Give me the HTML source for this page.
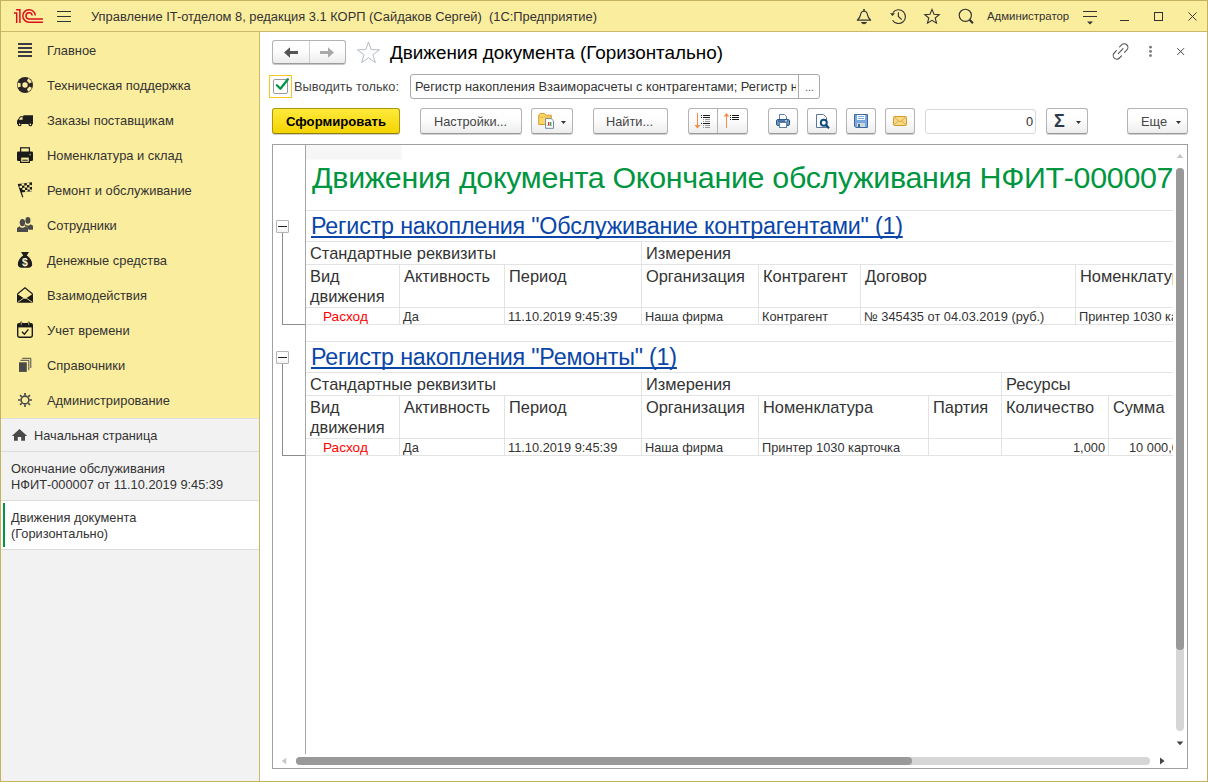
<!DOCTYPE html>
<html lang="ru"><head><meta charset="utf-8"><title>Движения документа (Горизонтально)</title>
<style>
*{box-sizing:border-box;margin:0;padding:0}
html,body{width:1208px;height:782px;overflow:hidden;background:#fff}
body{font-family:"Liberation Sans",sans-serif;font-size:13px;color:#333;position:relative}
.a{position:absolute}
.t{position:absolute;white-space:nowrap;line-height:1}
.btn{position:absolute;top:108px;height:26px;border:1px solid #b4b4b4;border-bottom-color:#9a9a9a;border-radius:3px;background:linear-gradient(#ffffff 0%,#fdfdfd 45%,#ededed 100%);box-shadow:0 1px 0 rgba(0,0,0,.18)}
.hl{position:absolute;left:306px;width:867px;height:1px;background:#e3e3e3}
.vl{position:absolute;width:1px;background:#e3e3e3}
.lnk{text-decoration:underline;text-decoration-thickness:2px;text-underline-offset:2px;text-decoration-skip-ink:none}
.gbox{position:absolute;left:276px;width:13px;height:13px;border:1px solid #b4b4b4;border-radius:1px;background:linear-gradient(#fff 50%,#f2f2f2)}
.gbox:after{content:"";position:absolute;left:1px;top:5px;width:9px;height:1px;background:#222}
svg{position:absolute;left:0;top:0;overflow:visible}
</style></head><body>
<div class="a" style="left:0;top:0;width:1208px;height:32px;background:#fbed9e;border-bottom:1px solid #cbb967"></div>
<div class="a" style="left:0;top:32px;width:260px;height:386px;background:#fbed9e"></div>
<div class="a" style="left:0;top:418px;width:260px;height:364px;background:#f2f2f2;border-top:1px solid #dedede"></div>
<div class="a" style="left:0;top:451px;width:260px;height:1px;background:#dcdcdc"></div>
<div class="a" style="left:0;top:500px;width:260px;height:50px;background:#fff;border-top:1px solid #dcdcdc;border-bottom:1px solid #dcdcdc"></div>
<div class="a" style="left:3px;top:503px;width:2px;height:44px;background:#009646"></div>
<div class="a" style="left:259px;top:32px;width:1px;height:750px;background:#cbb967"></div>
<div class="a" style="left:0;top:0;width:1208px;height:782px;border:1px solid #c5b25e;pointer-events:none"></div>
<div class="a" style="left:272px;top:40px;width:74px;height:24px;border:1px solid #b3b3b3;border-bottom-color:#9c9c9c;border-radius:3px;background:linear-gradient(#fff 0%,#fdfdfd 45%,#ececec 100%);box-shadow:0 1px 0 rgba(0,0,0,.22)"></div>
<div class="a" style="left:309px;top:41px;width:1px;height:22px;background:#cfcfcf"></div>
<div class="a" style="left:269px;top:75px;width:23px;height:23px;border:1px solid #fbc620"></div>
<div class="a" style="left:273px;top:79px;width:15px;height:15px;border:1px solid #9a9a9a;background:#fff;border-radius:2px"></div>
<div class="a" style="left:410px;top:74px;width:410px;height:25px;border:1px solid #a8a8a8;border-radius:3px;background:#fff"></div>
<div class="a" style="left:798px;top:75px;width:1px;height:23px;background:#a8a8a8"></div>
<div class="btn" style="left:272px;width:128px;background:linear-gradient(#ffea3c,#f3d400);border-color:#a8960f;border-bottom-color:#8f7f10"></div>
<div class="btn" style="left:420px;width:102px"></div>
<div class="btn" style="left:531px;width:42px"></div>
<div class="btn" style="left:593px;width:75px"></div>
<div class="btn" style="left:688px;width:60px"></div>
<div class="a" style="left:717px;top:109px;width:1px;height:24px;background:#b4b4b4"></div>
<div class="btn" style="left:768px;width:30px"></div>
<div class="btn" style="left:807px;width:30px"></div>
<div class="btn" style="left:846px;width:30px"></div>
<div class="btn" style="left:885px;width:30px"></div>
<div class="a" style="left:925px;top:109px;width:111px;height:25px;border:1px solid #d8d8d8;border-radius:3px;background:#fff"></div>
<div class="btn" style="left:1046px;width:42px"></div>
<div class="btn" style="left:1127px;width:61px"></div>
<div class="t" style="left:91px;top:11px;font-size:12.88px;color:#333;">Управление IT-отделом 8, редакция 3.1 КОРП (Сайдаков Сергей)&nbsp; (1С:Предприятие)</div>
<div class="t" style="left:987px;top:11px;font-size:11.4px;color:#333;">Администратор</div>
<div class="t" style="left:47px;top:45px;font-size:12.9px;color:#333;">Главное</div>
<div class="t" style="left:47px;top:80px;font-size:12.9px;color:#333;">Техническая поддержка</div>
<div class="t" style="left:47px;top:115px;font-size:12.9px;color:#333;">Заказы поставщикам</div>
<div class="t" style="left:47px;top:150px;font-size:12.9px;color:#333;">Номенклатура и склад</div>
<div class="t" style="left:47px;top:185px;font-size:12.9px;color:#333;">Ремонт и обслуживание</div>
<div class="t" style="left:47px;top:220px;font-size:12.9px;color:#333;">Сотрудники</div>
<div class="t" style="left:47px;top:255px;font-size:12.9px;color:#333;">Денежные средства</div>
<div class="t" style="left:47px;top:290px;font-size:12.9px;color:#333;">Взаимодействия</div>
<div class="t" style="left:47px;top:325px;font-size:12.9px;color:#333;">Учет времени</div>
<div class="t" style="left:47px;top:360px;font-size:12.9px;color:#333;">Справочники</div>
<div class="t" style="left:47px;top:395px;font-size:12.9px;color:#333;">Администрирование</div>
<div class="t" style="left:34px;top:430px;font-size:12.75px;color:#333;">Начальная страница</div>
<div class="t" style="left:11px;top:463px;font-size:12.8px;color:#333;">Окончание обслуживания</div>
<div class="t" style="left:11px;top:479px;font-size:12.8px;color:#333;">НФИТ-000007 от 11.10.2019 9:45:39</div>
<div class="t" style="left:11px;top:512px;font-size:12.8px;color:#333;">Движения документа</div>
<div class="t" style="left:11px;top:528px;font-size:12.8px;color:#333;">(Горизонтально)</div>
<div class="t" style="left:390px;top:44px;font-size:18.86px;color:#000;">Движения документа (Горизонтально)</div>
<div class="t" style="left:294px;top:81px;font-size:12.8px;color:#444;">Выводить только:</div>
<div class="t" style="left:415px;top:81px;font-size:12.85px;color:#333;width:381px;overflow:hidden;height:16px">Регистр накопления Взаиморасчеты с контрагентами; Регистр накопления</div>
<div class="t" style="left:805px;top:82px;font-size:11px;color:#555;">...</div>
<div class="t" style="left:286px;top:115px;font-size:13.13px;color:#000;font-weight:bold;">Сформировать</div>
<div class="t" style="left:434px;top:116px;font-size:12.75px;color:#444;">Настройки...</div>
<div class="t" style="left:606px;top:116px;font-size:12.75px;color:#444;">Найти...</div>
<div class="t" style="left:1026px;top:116px;font-size:12.8px;color:#333;">0</div>
<div class="t" style="left:1054px;top:112px;font-size:18px;color:#2b3a4a;font-weight:bold;">Σ</div>
<div class="t" style="left:1141px;top:116px;font-size:12.8px;color:#444;">Еще</div>
<div class="a" style="left:272px;top:144px;width:916px;height:625px;border:1px solid #a0a0a0;background:#fff"></div>
<div class="a" style="left:305px;top:145px;width:1px;height:609px;background:#a6a6a6"></div>
<div class="a" style="left:306px;top:145px;width:96px;height:15px;background:#f6f6f6;border-right:1px solid #fafafa;border-bottom:1px solid #fafafa"></div>
<div class="a" style="left:306px;top:145px;width:867px;height:610px;overflow:hidden"><div class="a" style="left:-306px;top:-145px;width:1208px;height:782px">
<div class="hl" style="top:210px"></div>
<div class="hl" style="top:241px"></div>
<div class="hl" style="top:264px"></div>
<div class="hl" style="top:307px"></div>
<div class="hl" style="top:324px"></div>
<div class="hl" style="top:341px"></div>
<div class="hl" style="top:372px"></div>
<div class="hl" style="top:395px"></div>
<div class="hl" style="top:438px"></div>
<div class="hl" style="top:455px"></div>
<div class="vl" style="left:399px;top:265px;height:59px"></div>
<div class="vl" style="left:504px;top:265px;height:59px"></div>
<div class="vl" style="left:758px;top:265px;height:59px"></div>
<div class="vl" style="left:860px;top:265px;height:59px"></div>
<div class="vl" style="left:1075px;top:265px;height:59px"></div>
<div class="vl" style="left:641px;top:242px;height:82px"></div>
<div class="vl" style="left:399px;top:396px;height:59px"></div>
<div class="vl" style="left:504px;top:396px;height:59px"></div>
<div class="vl" style="left:758px;top:396px;height:59px"></div>
<div class="vl" style="left:928px;top:396px;height:59px"></div>
<div class="vl" style="left:1108px;top:396px;height:59px"></div>
<div class="vl" style="left:641px;top:373px;height:82px"></div>
<div class="vl" style="left:1001px;top:373px;height:82px"></div>
<div class="t" style="left:312px;top:162px;font-size:30.4px;color:#00963f;letter-spacing:-0.3px">Движения документа Окончание обслуживания НФИТ-000007</div>
<div class="t lnk" style="left:311px;top:215px;font-size:23.3px;color:#0a46a8;letter-spacing:-0.2px">Регистр накопления "Обслуживание контрагентами" (1)</div>
<div class="t" style="left:310px;top:245px;font-size:16.4px;color:#333;">Стандартные реквизиты</div>
<div class="t" style="left:646px;top:245px;font-size:16.4px;color:#333;">Измерения</div>
<div class="t" style="left:310px;top:268px;font-size:16.4px;color:#333;">Вид</div>
<div class="t" style="left:310px;top:288px;font-size:16.4px;color:#333;">движения</div>
<div class="t" style="left:404px;top:268px;font-size:16.4px;color:#333;">Активность</div>
<div class="t" style="left:509px;top:268px;font-size:16.4px;color:#333;">Период</div>
<div class="t" style="left:646px;top:268px;font-size:16.4px;color:#333;">Организация</div>
<div class="t" style="left:323px;top:310px;font-size:13.6px;color:#ff0000;">Расход</div>
<div class="t" style="left:403px;top:311px;font-size:12.8px;color:#333;">Да</div>
<div class="t" style="left:508px;top:311px;font-size:12.8px;color:#333;">11.10.2019 9:45:39</div>
<div class="t" style="left:645px;top:311px;font-size:12.8px;color:#333;">Наша фирма</div>
<div class="t" style="left:763px;top:268px;font-size:16.4px;color:#333;">Контрагент</div>
<div class="t" style="left:865px;top:268px;font-size:16.4px;color:#333;">Договор</div>
<div class="t" style="left:1080px;top:268px;font-size:16.4px;color:#333;">Номенклатура</div>
<div class="t" style="left:762px;top:311px;font-size:12.8px;color:#333;">Контрагент</div>
<div class="t" style="left:864px;top:311px;font-size:12.8px;color:#333;">№ 345435 от 04.03.2019 (руб.)</div>
<div class="t" style="left:1079px;top:311px;font-size:12.8px;color:#333;">Принтер 1030 карточка</div>
<div class="t lnk" style="left:311px;top:346px;font-size:23.3px;color:#0a46a8;letter-spacing:-0.2px">Регистр накопления "Ремонты" (1)</div>
<div class="t" style="left:310px;top:376px;font-size:16.4px;color:#333;">Стандартные реквизиты</div>
<div class="t" style="left:646px;top:376px;font-size:16.4px;color:#333;">Измерения</div>
<div class="t" style="left:310px;top:399px;font-size:16.4px;color:#333;">Вид</div>
<div class="t" style="left:310px;top:419px;font-size:16.4px;color:#333;">движения</div>
<div class="t" style="left:404px;top:399px;font-size:16.4px;color:#333;">Активность</div>
<div class="t" style="left:509px;top:399px;font-size:16.4px;color:#333;">Период</div>
<div class="t" style="left:646px;top:399px;font-size:16.4px;color:#333;">Организация</div>
<div class="t" style="left:323px;top:441px;font-size:13.6px;color:#ff0000;">Расход</div>
<div class="t" style="left:403px;top:442px;font-size:12.8px;color:#333;">Да</div>
<div class="t" style="left:508px;top:442px;font-size:12.8px;color:#333;">11.10.2019 9:45:39</div>
<div class="t" style="left:645px;top:442px;font-size:12.8px;color:#333;">Наша фирма</div>
<div class="t" style="left:1006px;top:376px;font-size:16.4px;color:#333;">Ресурсы</div>
<div class="t" style="left:763px;top:399px;font-size:16.4px;color:#333;">Номенклатура</div>
<div class="t" style="left:933px;top:399px;font-size:16.4px;color:#333;">Партия</div>
<div class="t" style="left:1006px;top:399px;font-size:16.4px;color:#333;">Количество</div>
<div class="t" style="left:1113px;top:399px;font-size:16.4px;color:#333;">Сумма</div>
<div class="t" style="left:762px;top:442px;font-size:12.8px;color:#333;">Принтер 1030 карточка</div>
<div class="t" style="left:1005px;top:442px;font-size:12.8px;color:#333;width:100px;text-align:right">1,000</div>
<div class="t" style="left:1129px;top:442px;font-size:12.8px;color:#333;">10 000,00</div>
</div></div>
<div class="gbox" style="top:220px"></div>
<div class="a" style="left:282px;top:233px;width:1px;height:91px;background:#8c8c8c"></div>
<div class="a" style="left:282px;top:324px;width:23px;height:1px;background:#8c8c8c"></div>
<div class="gbox" style="top:351px"></div>
<div class="a" style="left:282px;top:364px;width:1px;height:91px;background:#8c8c8c"></div>
<div class="a" style="left:282px;top:455px;width:23px;height:1px;background:#8c8c8c"></div>
<div class="a" style="left:1176px;top:168px;width:8px;height:563px;border-radius:4px;background:#d6d6d6"></div>
<div class="a" style="left:1176px;top:168px;width:8px;height:482px;border-radius:4px;background:#999"></div>
<div class="a" style="left:296px;top:757px;width:854px;height:8px;border-radius:4px;background:#d6d6d6"></div>
<div class="a" style="left:296px;top:757px;width:616px;height:8px;border-radius:4px;background:#999"></div>
<svg width="1208" height="782" viewBox="0 0 1208 782" style="pointer-events:none">
<!-- 1C logo -->
<g fill="none" stroke="#d8101c" stroke-width="1.5">
 <path d="M14 12.9H16.7V22.9"/>
 <path d="M16.1 9.75H19.9V22.9"/>
 <path d="M35.35 15.5A6.27 6.27 0 1 0 29.1 22.17H42.9"/>
 <path d="M32.2 15.5A3.13 3.13 0 1 0 29.1 19.03H42.9"/>
</g>
<!-- title hamburger -->
<g fill="#333"><rect x="57" y="11" width="14" height="1"/><rect x="57" y="16" width="14" height="1"/><rect x="57" y="21" width="14" height="1"/></g>
<!-- bell -->
<g fill="none" stroke="#333" stroke-width="1.15" stroke-linejoin="round">
 <path d="M857.3 20.1H870.7C868.6 18 867.6 16.6 867.4 14.6C867.2 12.4 866.3 11.2 864 11.2C861.7 11.2 860.8 12.4 860.6 14.6C860.4 16.6 859.4 18 857.3 20.1Z"/>
</g>
<circle cx="864" cy="10" r="1.05" fill="#333"/>
<path d="M860.9 22.1H867.1C866.4 23.5 865.3 24.2 864 24.2C862.7 24.2 861.6 23.5 860.9 22.1Z" fill="#333"/>
<!-- history -->
<g fill="none" stroke="#333" stroke-width="1.15">
 <path d="M892.9 12.6A6.9 6.9 0 1 1 892.6 20.2"/>
 <path d="M898.4 12.2V16.5L901.7 19.7"/>
</g>
<path d="M890 13.2H895L892.5 16Z" fill="#333"/>
<!-- star -->
<path d="M932 9.4L934 14.2L939.2 14.6L935.2 18L936.5 23.1L932 20.3L927.5 23.1L928.8 18L924.8 14.6L930 14.2Z" fill="none" stroke="#333" stroke-width="1.1" stroke-linejoin="miter"/>
<!-- search -->
<circle cx="965.3" cy="15.3" r="6.1" fill="none" stroke="#333" stroke-width="1.15"/>
<path d="M969.6 19.7L972.9 23.3" stroke="#333" stroke-width="2" fill="none"/>
<!-- settings lines -->
<g fill="#333"><rect x="1083" y="11" width="14" height="1"/><rect x="1083" y="16" width="14" height="1"/><path d="M1087 21.5H1093L1090 24.5Z"/></g>
<!-- min/max/close -->
<rect x="1120" y="20" width="9" height="1" fill="#333"/>
<rect x="1154.5" y="12.5" width="8" height="8" fill="none" stroke="#333" stroke-width="1"/>
<path d="M1188.5 12.5L1196.5 20.5M1196.5 12.5L1188.5 20.5" stroke="#333" stroke-width="0.95" fill="none"/>

<!-- sidebar icons -->
<g fill="#3b3b45"><rect x="18" y="43" width="14" height="2"/><rect x="18" y="47" width="14" height="2"/><rect x="18" y="51" width="14" height="2"/><rect x="18" y="55" width="14" height="2"/></g>
<!-- lifebuoy -->
<g>
 <circle cx="25" cy="85" r="8" fill="#2a2426"/>
 <circle cx="25" cy="85" r="2.7" fill="#fbed9e"/>
 <g stroke="#fbed9e" stroke-width="3" fill="none">
  <path d="M27.6 79.7A5.9 5.9 0 0 1 30.5 82.9" />
  <path d="M30.5 87.1A5.9 5.9 0 0 1 27.6 90.3" />
  <path d="M19.4 87A5.9 5.9 0 0 1 19.4 83" />
 </g>
</g>
<!-- truck -->
<g fill="#1d1d1d">
 <path d="M23.4 115.2H33V124H17V120.8L20.2 116.3H23.4Z"/>
 <circle cx="19.6" cy="124.4" r="1.9"/><circle cx="30.4" cy="124.4" r="1.9"/>
</g>
<path d="M20.6 117.3H22.6V119.8H18.8Z" fill="#fbed9e"/>
<circle cx="19.6" cy="124.4" r="0.8" fill="#fbed9e"/><circle cx="30.4" cy="124.4" r="0.8" fill="#fbed9e"/>
<!-- printer -->
<g>
 <rect x="20.6" y="147.8" width="8.8" height="5" fill="#fbed9e" stroke="#1a1a1a" stroke-width="1.2"/>
 <rect x="17" y="151.6" width="16" height="9.4" rx="1.2" fill="#1a1a1a"/>
 <rect x="20.6" y="157" width="8.8" height="5.4" fill="#fbed9e" stroke="#1a1a1a" stroke-width="1.2"/>
 <rect x="22.3" y="159.7" width="5.4" height="1" fill="#1a1a1a"/>
 <rect x="29.4" y="153.8" width="1.6" height="1.6" fill="#8a8370"/>
</g>
<!-- flag -->
<g>
 <path d="M18.3 184L32 182.3V191.2L20.8 192.6Z" fill="#1a1a1a"/>
 <path d="M18.3 184L22.8 197.2" stroke="#1a1a1a" stroke-width="1.2" fill="none"/>
 <g fill="#fbed9e">
  <rect x="21.6" y="183.4" width="2.6" height="2.2"/><rect x="26.8" y="182.8" width="2.6" height="2.2"/>
  <rect x="19.6" y="185.8" width="2.4" height="2.2"/><rect x="24.4" y="185.4" width="2.6" height="2.2"/><rect x="29.4" y="184.9" width="2.4" height="2.2"/>
  <rect x="22.4" y="187.9" width="2.6" height="2.2"/><rect x="27.2" y="187.4" width="2.6" height="2.2"/>
  <rect x="25" y="190" width="2.6" height="1.8"/><rect x="29.8" y="189.5" width="2" height="1.6"/>
 </g>
</g>
<!-- people -->
<g fill="#4a4a4a">
 <ellipse cx="27.9" cy="220.4" rx="2.5" ry="3.3"/>
 <path d="M25.2 224.2C26.5 226 29.3 226 30.5 224.2L33 225.8V229.8H28.6L27.2 227.2L24.6 225.6Z"/>
 <ellipse cx="22.4" cy="222.6" rx="2.7" ry="3.6"/>
 <path d="M19.6 226.2C21 228.3 23.8 228.3 25.2 226.2L28 228V232H17V228Z"/>
</g>
<!-- money bag -->
<g>
 <path d="M21 252H29L26.8 255.6C30.2 257.6 32.2 261.3 32.2 264.3C32.2 266.6 30.6 267.8 28.6 267.8H21.4C19.4 267.8 17.8 266.6 17.8 264.3C17.8 261.3 19.8 257.6 23.2 255.6Z" fill="#1e1e1e"/>
 <text x="25" y="266.2" font-family="Liberation Sans, sans-serif" font-size="10.5" font-weight="bold" fill="#fdf6d0" text-anchor="middle">$</text>
</g>
<!-- open envelope -->
<g>
 <path d="M17.4 294L25 287.8L32.6 294" fill="none" stroke="#1a1a1a" stroke-width="1.2" stroke-linejoin="miter"/>
 <path d="M17 293.8L25 299L33 293.8V302.8H17Z" fill="#1a1a1a"/>
 <path d="M17.6 302.4L25 297.2L32.4 302.4" fill="none" stroke="#fbed9e" stroke-width="0.9"/>
</g>
<!-- calendar -->
<g>
 <rect x="17.7" y="323.6" width="14.6" height="13.6" rx="1.6" fill="none" stroke="#1a1a1a" stroke-width="1.4"/>
 <rect x="17.7" y="323.6" width="14.6" height="3.8" fill="#1a1a1a"/>
 <rect x="20.5" y="321.8" width="1.4" height="3.4" rx="0.7" fill="#fbed9e" stroke="#1a1a1a" stroke-width="0.7"/>
 <rect x="28.1" y="321.8" width="1.4" height="3.4" rx="0.7" fill="#fbed9e" stroke="#1a1a1a" stroke-width="0.7"/>
 <path d="M22 331.8L24.4 334.2L28.4 329.4" fill="none" stroke="#1a1a1a" stroke-width="1.4"/>
</g>
<!-- docs -->
<g fill="none" stroke="#4a4a4a" stroke-width="1">
 <rect x="19" y="362.3" width="7.8" height="9.6" fill="#4a4a4a" stroke="none"/>
 <path d="M20.4 360.3H28.8V370.2"/>
 <path d="M22.2 358.3H30.8V368"/>
</g>
<!-- gear -->
<g stroke="#4a4a4a" fill="none">
 <circle cx="25" cy="400" r="3.9" stroke-width="1.6"/>
 <g stroke-width="1.7">
  <path d="M25 393V395.4M25 404.6V407M18 400H20.4M29.6 400H32M20.05 395.05L21.75 396.75M28.25 403.25L29.95 404.95M29.95 395.05L28.25 396.75M21.75 403.25L20.05 404.95"/>
 </g>
</g>
<!-- home -->
<path d="M19.5 429L27.2 436H25V440.8H21.2V437H17.8V440.8H14V436H11.8Z" fill="#4a4a4a"/>

<!-- nav arrows -->
<path d="M284 52.5L290 47.2V51.1H298V53.9H290V57.8Z" fill="#555"/>
<path d="M334 52.5L328 47.2V51.1H320V53.9H328V57.8Z" fill="#a9a9a9"/>
<!-- fav star -->
<path d="M368.5 42L371.2 49.6L379.6 49.8L372.9 54.8L375.4 62.6L368.5 57.9L361.6 62.6L364.1 54.8L357.4 49.8L365.8 49.6Z" fill="#fff" stroke="#b4bcc6" stroke-width="1"/>
<!-- link -->
<g fill="none" stroke="#555" stroke-width="1.1" stroke-linecap="round">
 <path d="M1119.6 46.8L1121.6 44.9A3.3 3.3 0 0 1 1126.9 49.9L1124.6 52.3"/>
 <path d="M1121.6 55.9L1119.4 58A3.3 3.3 0 0 1 1114.2 53L1116.4 50.7"/>
 <path d="M1118.3 53.6L1123 48.6"/>
</g>
<g fill="#777"><circle cx="1150.5" cy="47.2" r="1.4"/><circle cx="1150.5" cy="51.4" r="1.4"/><circle cx="1150.5" cy="55.6" r="1.4"/></g>
<path d="M1177.3 48.2L1184 54.9M1184 48.2L1177.3 54.9" stroke="#444" stroke-width="1" fill="none"/>
<!-- checkbox check -->
<path d="M276.9 85.3L280.4 88.8L287.9 79.3" fill="none" stroke="#009646" stroke-width="2.3" stroke-linecap="round" stroke-linejoin="round"/>

<!-- toolbar: folder+doc -->
<g>
 <path d="M538.7 124.5V115.2L540.2 113.5H544.5L546 115.2H551.3V124.5Z" fill="#fbd768" stroke="#d79a2b" stroke-width="1"/>
 <path d="M539.2 117H550.8" stroke="#e9b84a" stroke-width="1"/>
 <path d="M545.6 118.6H551.2L553.5 120.9V128.3H545.6Z" fill="#fff" stroke="#6c8aa0" stroke-width="1"/>
 <rect x="548" y="122" width="1.4" height="3.4" fill="#e8232a"/><rect x="550" y="122" width="1.4" height="3.4" fill="#2fb54a"/>
 <rect x="547.2" y="125.4" width="5" height="0.6" fill="#888"/>
 <path d="M561 121H566L563.5 124Z" fill="#333"/>
</g>
<!-- sort desc -->
<g>
 <rect x="697" y="113" width="1" height="13" fill="#f58b4c"/><path d="M694.5 125H700.5L697.5 128.6Z" fill="#f58b4c"/>
 <g fill="#1a1a1a"><rect x="701" y="115" width="1" height="1"/><rect x="703" y="115" width="7" height="1"/><rect x="701" y="117" width="1" height="1"/><rect x="703" y="117" width="7" height="1"/><rect x="701" y="123" width="1" height="1"/><rect x="703" y="123" width="7" height="1"/></g>
 <g fill="#999"><rect x="703" y="119" width="1" height="1"/><rect x="705" y="119" width="5" height="1"/><rect x="703" y="121" width="1" height="1"/><rect x="705" y="121" width="5" height="1"/><rect x="703" y="125" width="1" height="1"/><rect x="705" y="125" width="5" height="1"/><rect x="703" y="127" width="1" height="1"/><rect x="705" y="127" width="5" height="1"/></g>
</g>
<!-- sort asc -->
<g>
 <rect x="726" y="115" width="1" height="13" fill="#f58b4c"/><path d="M723.5 116.6H729.5L726.5 113Z" fill="#f58b4c"/>
 <g fill="#1a1a1a"><rect x="730" y="115" width="1" height="1"/><rect x="732" y="115" width="7" height="1"/><rect x="730" y="117" width="1" height="1"/><rect x="732" y="117" width="7" height="1"/><rect x="730" y="119" width="1" height="1"/><rect x="732" y="119" width="7" height="1"/></g>
</g>
<!-- print -->
<g>
 <path d="M779.5 119V114.5H784.5L786.5 116.5V119" fill="#fff" stroke="#5a7fa8" stroke-width="1"/>
 <rect x="776.5" y="119.5" width="13" height="6" rx="1.5" fill="#6f97c4" stroke="#2c5a8a" stroke-width="1"/>
 <rect x="778" y="120.6" width="10" height="1" fill="#2c4f78"/>
 <rect x="779.5" y="122.5" width="7" height="5" fill="#fff" stroke="#5a7fa8" stroke-width="1"/>
 <rect x="785" y="120.4" width="2" height="1" fill="#fff"/>
</g>
<!-- preview -->
<g>
 <path d="M816.5 114.5H823.5L826.5 117.5V127.5H816.5Z" fill="#fbfbfb" stroke="#5a7896" stroke-width="1"/>
 <circle cx="823.8" cy="122.8" r="3" fill="#fff" stroke="#0d4a7c" stroke-width="1.9"/>
 <path d="M826.2 125.4L829 128.2" stroke="#0d4a7c" stroke-width="2.2" fill="none"/>
</g>
<!-- save -->
<g>
 <path d="M854.5 114.5H867.5V127.5H855.8L854.5 126.2Z" fill="#7aa7dc" stroke="#3c6aa0" stroke-width="1"/>
 <rect x="857" y="115" width="8" height="5" fill="#fff"/>
 <rect x="858" y="116" width="6" height="1" fill="#7aa7dc"/><rect x="858" y="118" width="6" height="1" fill="#7aa7dc"/>
 <rect x="857" y="123" width="8" height="4" fill="#cfd6d6"/>
 <rect x="858" y="124" width="2" height="3" fill="#3c6aa0"/>
</g>
<!-- mail -->
<g>
 <rect x="893.5" y="116.5" width="13" height="9" rx="1.2" fill="#f9d986" stroke="#d39a2c" stroke-width="1"/>
 <path d="M894 117L900 122L906 117M894 125L898.4 120.8M906 125L901.6 120.8" fill="none" stroke="#dca640" stroke-width="0.9"/>
</g>
<!-- dropdown arrows -->
<path d="M1076 121H1081L1078.5 124Z" fill="#333"/>
<path d="M1176 121H1181L1178.5 124Z" fill="#333"/>
<!-- scroll arrows -->
<path d="M1176.8 158H1183.2L1180 153.8Z" fill="#c6c6c6"/>
<path d="M1176.7 741.5H1183.3L1180 745.3Z" fill="#444"/>
<path d="M1160 757.6V764.4L1164.6 761Z" fill="#444"/>
<path d="M286.2 757.8V764.2L281.8 761Z" fill="#c6c6c6"/>
</svg>

</body></html>
